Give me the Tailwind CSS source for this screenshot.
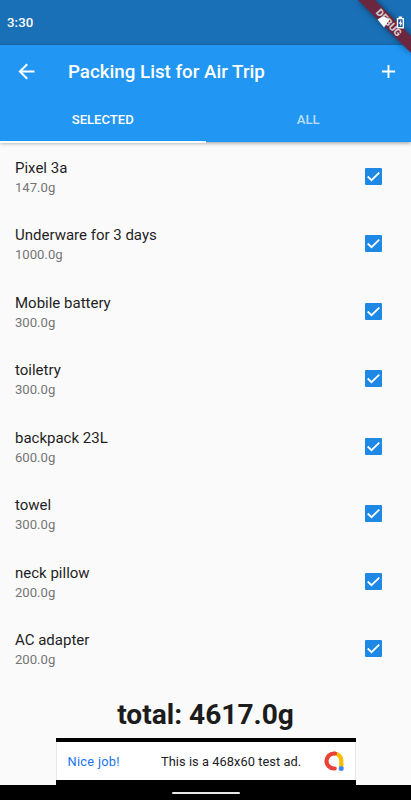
<!DOCTYPE html>
<html lang="en">
<head>
  <meta charset="UTF-8" />
  <title>Packing List for Air Trip</title>
  <meta name="viewport" content="width=device-width, initial-scale=1.0" />
  <script src="https://cdn.jsdelivr.net/npm/@tailwindcss/browser@4"></script>
</head>
<body class="bg-[#fafafa] font-[Roboto,sans-serif]">
  <div class="relative w-[411px] h-[800px] overflow-hidden flex flex-col">
    <!-- Status bar -->
    <div class="h-[45px] shrink-0 bg-[#1a70b7] flex items-center pl-[7px] text-white">
      <span class="text-[13.2px] font-medium leading-4 tracking-[0.1px]">3:30</span>
    </div>

    <!-- App bar -->
    <header class="relative z-10 h-[97px] shrink-0 bg-[#2196f3] text-white shadow-[0_1px_4px_rgba(0,0,0,0.4)]">
      <div class="h-[53px] flex items-center pl-[17px] pr-3.5">
        <svg class="w-[19px] h-[19px]" viewBox="2.500 2.500 19 19" fill="#fff"><path d="M20 11H7.830l5.590-5.590L12 4l-8 8 8 8 1.410-1.410L7.830 13H20v-2z" /></svg>
        <h1 class="ml-8 pt-px text-[18.75px] font-medium leading-6">Packing List for Air Trip</h1>
        <svg class="ml-auto w-[17px] h-[17px]" viewBox="3 3 18 18" fill="#fff"><path d="M19 13h-6v6h-2v-6H5v-2h6V5h2v6h6v2z" /></svg>
      </div>
      <div class="h-11 grid grid-cols-2 text-[13.1px] font-medium text-center">
        <div class="leading-[43px] border-b-2 border-white">SELECTED</div>
        <div class="leading-[43px] text-white/70">ALL</div>
      </div>
    </header>

    <!-- Items, filled in below -->
    <ul id="items" class="h-[540px] shrink-0 flex flex-col pt-[0.5px]"></ul>

    <div class="h-14 shrink-0 pt-[15px] text-center text-[28.1px] leading-9 font-bold text-[#1c1c1c]">total: 4617.0g</div>

    <!-- Banner ad -->
    <div class="w-[300px] h-[47px] shrink-0 mx-auto bg-black pt-1">
      <div class="h-[38px] bg-white border-x border-[#e4e8ea] flex items-center pl-[11px] pr-[11px] text-[12.8px]">
        <span class="pt-px text-[#1a73f0] tracking-[0.3px]">Nice job!</span>
        <span class="pt-px ml-[41px] text-[#202124] tracking-[0.07px]">This is a 468x60 test ad.</span>
        <svg class="ml-auto w-5 h-5" viewBox="0 0 20 20" fill="none" stroke-width="4.200" stroke-linecap="round">
          <path d="M10.300 2.500A7 7.200 0 0 1 17.300 9.500V16.500" stroke="#fbbc04" />
          <path d="M11 2.500H10A7.500 7.500 0 0 0 10 17.500H10.700" stroke="#ea4335" />
          <circle cx="17.200" cy="17.400" r="2.500" fill="#4285f4" />
        </svg>
      </div>
    </div>

    <!-- Navigation bar -->
    <div class="grow bg-black flex justify-center pt-[7px]">
      <div class="w-[68px] h-[2px] rounded-full bg-[#e8e8e8]"></div>
    </div>

    <!-- Debug ribbon with the wifi and battery icons -->
    <svg class="absolute z-20 top-0 right-0 w-20 h-16" viewBox="0 0 80 64">
      <path d="M27 0H44L80 36V53Z" fill="#6b2740" class="drop-shadow-[0_0_3px_rgba(0,0,0,0.5)]" />
      <text x="58" y="26.200" transform="rotate(48 58 22.500)" text-anchor="middle" font-family="Roboto, sans-serif" font-size="10.200" font-weight="900" fill="#d6c5c9">DEBUG</text>
      <path d="M46.500 19.500Q52.500 14.500 58.500 19.500L53 27.500Z" fill="#fff" />
      <path d="M67.700 16.500h3.400v1.500h1.900V28.500h-7.200V18h1.900z" fill="#fff" />
      <path d="M67.200 19.300h4.400v7.800h-4.400z" fill="#184f98" />
      <path d="M70.200 19.500L67.700 23.700h1.400v3l2.300-4h-1.200z" fill="#fff" />
    </svg>
  </div>

  <script>
    const items = [
      ["Pixel 3a", "147.0g"],
      ["Underware for 3 days", "1000.0g"],
      ["Mobile battery", "300.0g"],
      ["toiletry", "300.0g"],
      ["backpack 23L", "600.0g"],
      ["towel", "300.0g"],
      ["neck pillow", "200.0g"],
      ["AC adapter", "200.0g"],
    ];

    document.getElementById("items").innerHTML = items.map(([name, weight]) => `
      <li class="h-[67.5px] shrink-0 flex items-center justify-between pl-[15px] pr-[29px]">
        <div class="pt-[2px]">
          <p class="text-[15px] leading-5 text-[#1f1f1f]">${name}</p>
          <p class="text-[13.1px] leading-[19px] text-[#757575]">${weight}</p>
        </div>
        <svg class="w-[17px] h-[17px]" viewBox="0 0 17 17">
          <rect width="17" height="17" rx="1" fill="#1e88e5" />
          <path d="M2.700 8.500L6.500 12.200L14.300 4.700" fill="none" stroke="#fff" stroke-width="1.800" />
        </svg>
      </li>`).join("");
  </script>
</body>
</html>
